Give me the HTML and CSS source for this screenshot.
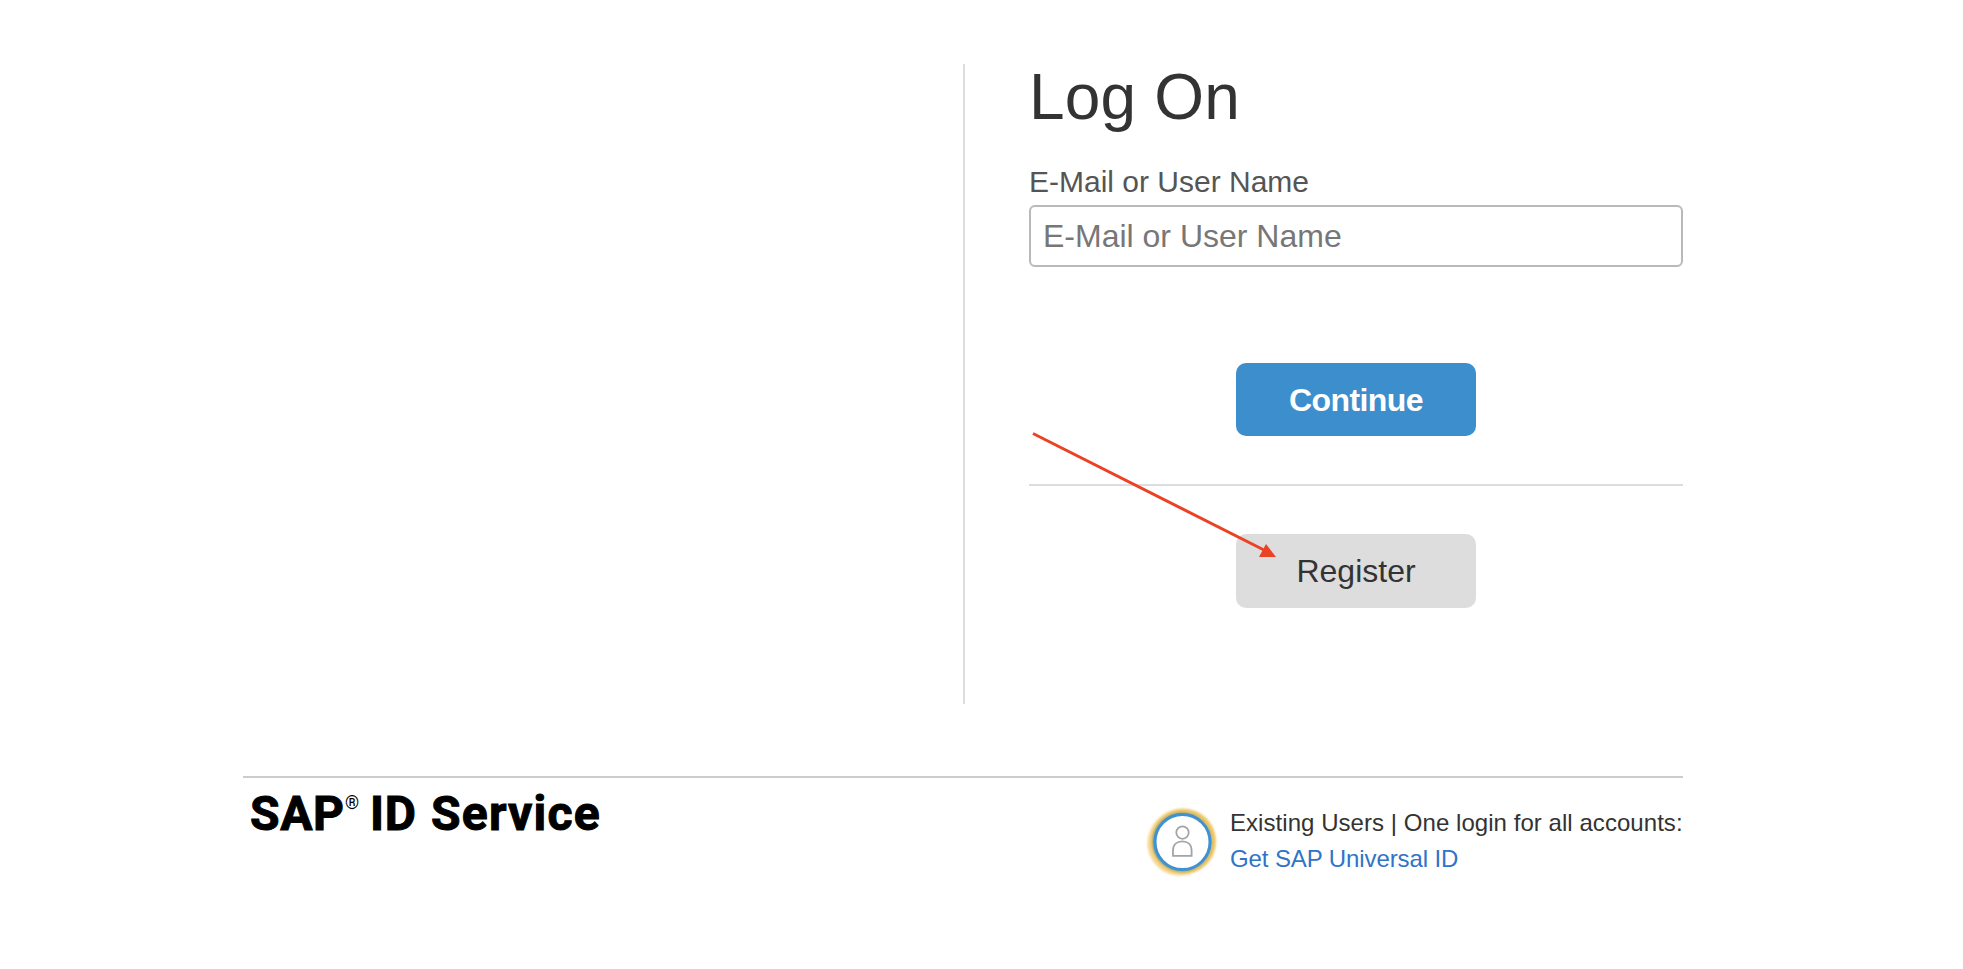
FILE: index.html
```
<!DOCTYPE html>
<html lang="en">
<head>
<meta charset="utf-8">
<title>Log On</title>
<link rel="stylesheet" href="styles.css">
</head>
<body>
<div class="page">
  <main class="main">
    <form class="logon">
      <h1 class="title">Log On</h1>
      <label class="label" for="user">E-Mail or User Name</label>
      <input class="field" id="user" type="text" placeholder="E-Mail or User Name">
      <button class="button primary" type="button">Continue</button>
      <hr class="rule">
      <button class="button secondary" type="button">Register</button>
    </form>
  </main>
  <footer class="footer">
    <div class="brand"><span class="sap">SAP</span><sup class="mark">®</sup><span class="id">ID</span><span class="service">Service</span></div>
    <div class="universal">
      <svg class="avatar" width="72" height="72" viewBox="0 0 72 72" fill="none">
        <defs><filter id="soft"><feGaussianBlur stdDeviation="0.8"/></filter></defs>
        <g filter="url(#soft)">
          <ellipse cx="35.500" cy="36" rx="34.500" ry="33" fill="#f5d793" transform="rotate(-35 35.5 36)"/>
          <circle cx="37.500" cy="35.500" r="32.500" fill="#ecc564"/>
          <circle cx="36" cy="36" r="29.500" fill="#6b9a85"/>
        </g>
        <circle cx="36.500" cy="36" r="27.500" fill="#fff" stroke="#3f92d2" stroke-width="3"/>
        <circle cx="36.500" cy="26.600" r="6.200" stroke="#a4a4a4" stroke-width="1.800"/>
        <path d="M27 49.800V44.500C27 38.500 31 35.300 36.300 35.300S45.600 38.500 45.600 44.500V49.800Z" stroke="#a4a4a4" stroke-width="1.800"/>
      </svg>
      <div class="info">
        <div>Existing Users | One login for all accounts:</div>
        <a class="link">Get SAP Universal ID</a>
      </div>
    </div>
  </footer>
  <svg class="arrow" width="246" height="128" viewBox="0 0 246 128">
    <path d="M3 3.500L234 120" stroke="#ec4224" stroke-width="3"/>
    <path d="M236 114L246 127H229Z" fill="#ec4224"/>
  </svg>
</div>
</body>
</html>
```
FILE: styles.css
```
* { box-sizing: border-box; }
body { margin: 0; background: #fff; color: #333; font-family: "Liberation Sans", Arial, sans-serif; }
.page { position: relative; width: 1440px; height: 969px; margin-left: 243px; padding-top: 64px; overflow: visible; }
.main { display: flex; justify-content: flex-end; height: 640px; }
.logon { display: flex; flex-direction: column; align-items: center; width: 720px; height: 640px; padding-left: 64px; border-left: 2px solid #ddd; }
.title { align-self: flex-start; margin: 0 0 32px; font-size: 64px; font-weight: 400; line-height: 66px; letter-spacing: 0.2px; }
.label { align-self: flex-start; margin-bottom: 3px; color: #555; font-size: 30px; line-height: 40px; }
.field { width: 654px; height: 62px; padding: 0 12px; border: 2px solid #b9b9b9; border-radius: 6px; background: #fff; font: 32px "Liberation Sans", Arial, sans-serif; outline: 0; }
.field::placeholder { color: #777; opacity: 1; }
.button { width: 240px; height: 73px; padding: 0; border: 0; border-radius: 10px; font: 32px "Liberation Sans", Arial, sans-serif; }
.primary { margin-top: 96px; padding-top: 2px; background: #3d8ecd; color: #fff; font-weight: 700; letter-spacing: -0.6px; }
.rule { width: 100%; height: 2px; margin: 48px 0; border: 0; background: #ddd; }
.secondary { height: 74px; background: #ddd; color: #333; }
.footer { display: flex; justify-content: space-between; margin-top: 72px; border-top: 2px solid #ccc; }
.brand { display: flex; padding: 10px 0 0 7px; color: #000; font: 700 48px/52px Roboto, sans-serif; -webkit-text-stroke: 1px #000; }
.sap { width: 95px; letter-spacing: 0.6px; }
.mark { width: 25px; margin-top: 5px; font-size: 18px; line-height: 20px; font-weight: 400; -webkit-text-stroke: 0; }
.id { width: 61px; letter-spacing: 0.8px; }
.service { letter-spacing: 1.2px; }
.universal { display: flex; gap: 12px; }
.avatar { margin-top: 28px; }
.info { width: 453px; padding-top: 27px; font-size: 24px; line-height: 36px; white-space: nowrap; letter-spacing: 0.05px; }
.link { color: #2f74c8; letter-spacing: -0.1px; }
.arrow { position: absolute; left: 787px; top: 430px; }
```
